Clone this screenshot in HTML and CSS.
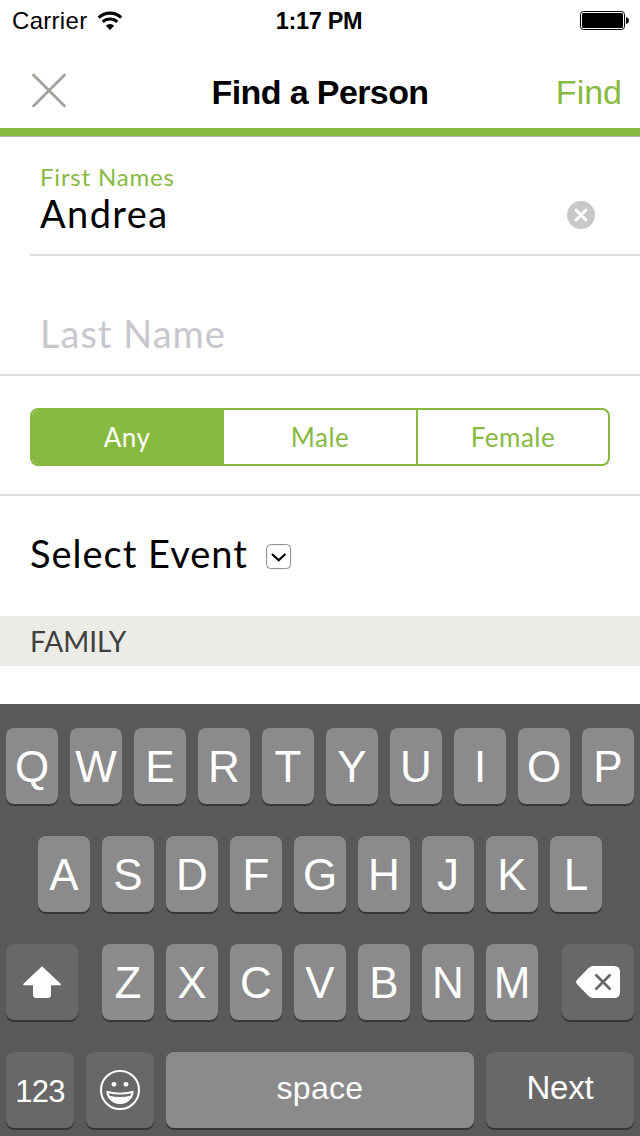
FILE: index.html
```html
<!DOCTYPE html>
<html lang="en">
<head>
  <meta charset="UTF-8" />
  <meta name="viewport" content="width=device-width, initial-scale=1.0"/>
  <title>Find a Person</title>
  <link rel="stylesheet" href="styles.css">
</head>
<body>

  <!-- Status bar -->
  <div class="status-bar">
    <div class="carrier">
      <span>Carrier</span>
      <svg class="wifi" width="26" height="20" viewBox="0 0 26 20">
        <path d="M1.8 6.6 A16 16 0 0 1 24.2 6.6" fill="none" stroke="#000" stroke-width="3.2"/>
        <path d="M5.8 10.9 A10.4 10.4 0 0 1 20.2 10.9" fill="none" stroke="#000" stroke-width="3"/>
        <path d="M8.9 14.7 A5.8 5.8 0 0 1 17.1 14.7 L13 19 Z" fill="#000"/>
      </svg>
    </div>
    <div class="time">1:17 PM</div>
    <svg class="battery" width="50" height="20" viewBox="0 0 50 20">
      <rect x="0.5" y="0.5" width="44" height="18" rx="3" fill="#fff" stroke="#000"/>
      <rect x="2" y="2" width="41" height="15" rx="1.5" fill="#000"/>
      <path d="M46 6 C49.8 6.5 49.8 12.5 46 13 Z" fill="#000"/>
    </svg>
  </div>

  <!-- Navbar -->
  <nav class="navbar">
    <button class="close-btn" aria-label="Close">
      <svg width="36" height="36" viewBox="0 0 36 36">
        <path d="M2.5 2 L33.500 33 M33.500 2 L2.500 33" stroke="#a2a29d" stroke-width="2.8" stroke-linecap="round"/>
      </svg>
    </button>
    <h1>Find a Person</h1>
    <button class="find-btn">Find</button>
  </nav>

  <!-- Search form -->
  <main class="search-form">
    <div class="field first-name">
      <div>
        <div class="label">First Names</div>
        <div class="value">Andrea</div>
      </div>
      <svg class="clear" width="28" height="28" viewBox="0 0 28 28">
        <circle cx="14" cy="14" r="14" fill="#c8c8c8"/>
        <path d="M9 9 L19 19 M19 9 L9 19" stroke="#fff" stroke-width="2.9" stroke-linecap="round"/>
      </svg>
    </div>

    <div class="field last-name">
      <div class="placeholder">Last Name</div>
    </div>

    <div class="gender">
      <div class="segments">
        <button class="segment active">Any</button>
        <button class="segment">Male</button>
        <button class="segment">Female</button>
      </div>
    </div>

    <div class="event">
      <span>Select Event</span>
      <svg width="26" height="26" viewBox="0 0 26 26">
        <rect x="0.6" y="0.6" width="24" height="24" rx="4" fill="#fff" stroke="#888"/>
        <path d="M6 10 L12.7 16.3 L19.4 10" fill="none" stroke="#000" stroke-width="2.2"/>
      </svg>
    </div>

    <h2 class="section-title">FAMILY</h2>
  </main>

  <!-- Keyboard -->
  <div class="keyboard">
    <div class="row">
      <button class="key">Q</button>
      <button class="key">W</button>
      <button class="key">E</button>
      <button class="key">R</button>
      <button class="key">T</button>
      <button class="key">Y</button>
      <button class="key">U</button>
      <button class="key">I</button>
      <button class="key">O</button>
      <button class="key">P</button>
    </div>
    <div class="row">
      <button class="key">A</button>
      <button class="key">S</button>
      <button class="key">D</button>
      <button class="key">F</button>
      <button class="key">G</button>
      <button class="key">H</button>
      <button class="key">J</button>
      <button class="key">K</button>
      <button class="key">L</button>
    </div>
    <div class="row spread">
      <button class="key dark shift" aria-label="Shift">
        <svg width="38" height="32" viewBox="0 0 38 32">
          <path d="M19 0.3 L37.3 17.5 Q38.6 19.3 36.6 19.3 H28 V28.5 Q28 32 24.5 32 H13.5 Q10 32 10 28.5 V19.3 H1.4 Q-0.6 19.3 0.7 17.5 Z" fill="#fff"/>
        </svg>
      </button>
      <div class="row">
        <button class="key">Z</button>
        <button class="key">X</button>
        <button class="key">C</button>
        <button class="key">V</button>
        <button class="key">B</button>
        <button class="key">N</button>
        <button class="key">M</button>
      </div>
      <button class="key dark shift" aria-label="Delete">
        <svg width="44" height="32" viewBox="0 0 44 32">
          <path d="M17 0 H38 Q44 0 44 6 V26 Q44 32 38 32 H17 Q14.5 32 12.5 30 L0.7 17.7 Q-0.5 16 0.7 14.3 L12.5 2 Q14.5 0 17 0 Z" fill="#fff"/>
          <path d="M19.5 8.5 L34.5 23.5 M34.5 8.5 L19.5 23.5" stroke="#686868" stroke-width="2.8"/>
        </svg>
      </button>
    </div>
    <div class="row">
      <button class="key dark numbers">123</button>
      <button class="key dark emoji" aria-label="Emoji">
        <svg width="40" height="40" viewBox="0 0 40 40">
          <circle cx="20" cy="20" r="19" fill="none" stroke="#fff" stroke-width="2"/>
          <circle cx="14" cy="14.3" r="2.4" fill="#fff"/>
          <circle cx="26" cy="14.3" r="2.4" fill="#fff"/>
          <path d="M6.8 21.3 Q20 25 33.2 21.3 C32.8 29 27 33.6 20 33.6 C13 33.6 7.2 29 6.8 21.3 Z" fill="#fff" stroke="#fff" stroke-linejoin="round"/>
          <path d="M8.4 23.2 Q20 25.7 31.6 23.2 L30 26 Q20 28.2 10 26 Z" fill="#686868"/>
        </svg>
      </button>
      <button class="key space">space</button>
      <button class="key dark next">Next</button>
    </div>
  </div>

</body>
</html>
```

FILE: styles.css
```css
* {
  margin: 0;
  padding: 0;
  box-sizing: border-box;
}

body {
  width: 640px;
  height: 1136px;
  overflow: hidden;
  display: flex;
  flex-direction: column;
  background-color: #fff;
  color: #000;
  font-family: "Liberation Sans", Arial, sans-serif;
}

button {
  background: none;
  border: none;
  font-family: inherit;
  cursor: pointer;
}

svg {
  display: block;
}

/* Status bar */
.status-bar {
  height: 40px;
  display: grid;
  grid-template-columns: 1fr auto 1fr;
  align-items: center;
  padding: 2px 10px 0 12px;
  font-size: 24px;
}

.carrier {
  display: flex;
  align-items: center;
  gap: 10px;
  letter-spacing: 0.3px;
}

.wifi {
  margin-bottom: 1px;
}

.time {
  margin-left: -4px;
  font-size: 23.5px;
  font-weight: bold;
  letter-spacing: -0.3px;
}

.battery {
  justify-self: end;
}

/* Navbar */
.navbar {
  height: 97px;
  display: grid;
  grid-template-columns: 1fr auto 1fr;
  align-items: center;
  padding: 8px 18px 0 31px;
  border-bottom: 1px solid #b2b2b2;
  box-shadow: inset 0 -8px #88b941;
}

.navbar h1 {
  font-size: 34px;
  letter-spacing: -0.6px;
  line-height: 88px;
  margin-left: -13px;
}

.close-btn {
  justify-self: start;
  margin-bottom: 2px;
}

.find-btn {
  justify-self: end;
  font-size: 34px;
  color: #88b941;
}

/* Form */
.search-form {
  height: 567px;
  font-family: Lato, sans-serif;
}

.field {
  display: flex;
  border-bottom: 2px solid #dedede;
}

.first-name {
  height: 119px;
  margin-left: 30px;
  padding: 25px 45px 0 10px;
  justify-content: space-between;
}

.label {
  font-size: 24px;
  line-height: 30px;
  letter-spacing: 0.8px;
  color: #88b941;
}

.value,
.placeholder,
.event {
  font-size: 38px;
  line-height: 44px;
  letter-spacing: 1px;
}

.value {
  margin-top: -1px;
  letter-spacing: 1.4px;
}

.clear {
  margin-top: 39px;
}

.last-name {
  height: 120px;
  padding: 55px 40px 0;
}

.placeholder {
  color: #c7c7cd;
}

.gender {
  height: 120px;
  padding: 32px 30px 28px;
  border-bottom: 2px solid #dedede;
}

.segments {
  height: 58px;
  display: grid;
  grid-template-columns: 190px 194px 1fr;
  border: 2px solid #88b941;
  border-radius: 8px;
  overflow: hidden;
}

.segment {
  font-size: 26px;
  letter-spacing: 0.5px;
  color: #88b941;
}

.segment + .segment {
  border-left: 2px solid #88b941;
}

.segment.active {
  background-color: #88b941;
  color: #fff;
}

.event {
  height: 120px;
  display: flex;
  align-items: center;
  gap: 18px;
  padding: 0 30px 6px;
}

.event svg {
  margin-top: 8px;
}

.section-title {
  height: 50px;
  padding-left: 30px;
  background-color: #ebece6;
  color: #3f3f3d;
  font-size: 28px;
  font-weight: normal;
  line-height: 50px;
}

/* Keyboard */
.keyboard {
  height: 432px;
  display: flex;
  flex-direction: column;
  gap: 32px;
  padding: 24px 6px 0;
  background-color: #595959;
}

.row {
  display: flex;
  justify-content: center;
  gap: 12px;
}

.spread {
  justify-content: space-between;
}

.key {
  width: 52px;
  height: 76px;
  display: flex;
  justify-content: center;
  align-items: center;
  padding-top: 2px;
  border-radius: 8px;
  background-color: #8b8b8b;
  box-shadow: 0 2px #363636;
  color: #fff;
  font-size: 44px;
}

.key.dark {
  background-color: #686868;
}

.key.shift {
  width: 72px;
  padding-top: 0;
}

.key.numbers,
.key.emoji {
  width: 68px;
  font-size: 31px;
}

.key.numbers {
  padding-top: 3px;
  letter-spacing: -0.8px;
}

.key.emoji {
  padding-top: 0;
}

.key.space {
  width: 308px;
  padding: 0 0 4px;
  font-size: 32px;
  letter-spacing: 0.3px;
}

.key.next {
  width: 148px;
  padding: 0 0 4px;
  font-size: 33px;
  letter-spacing: -0.2px;
}
```
